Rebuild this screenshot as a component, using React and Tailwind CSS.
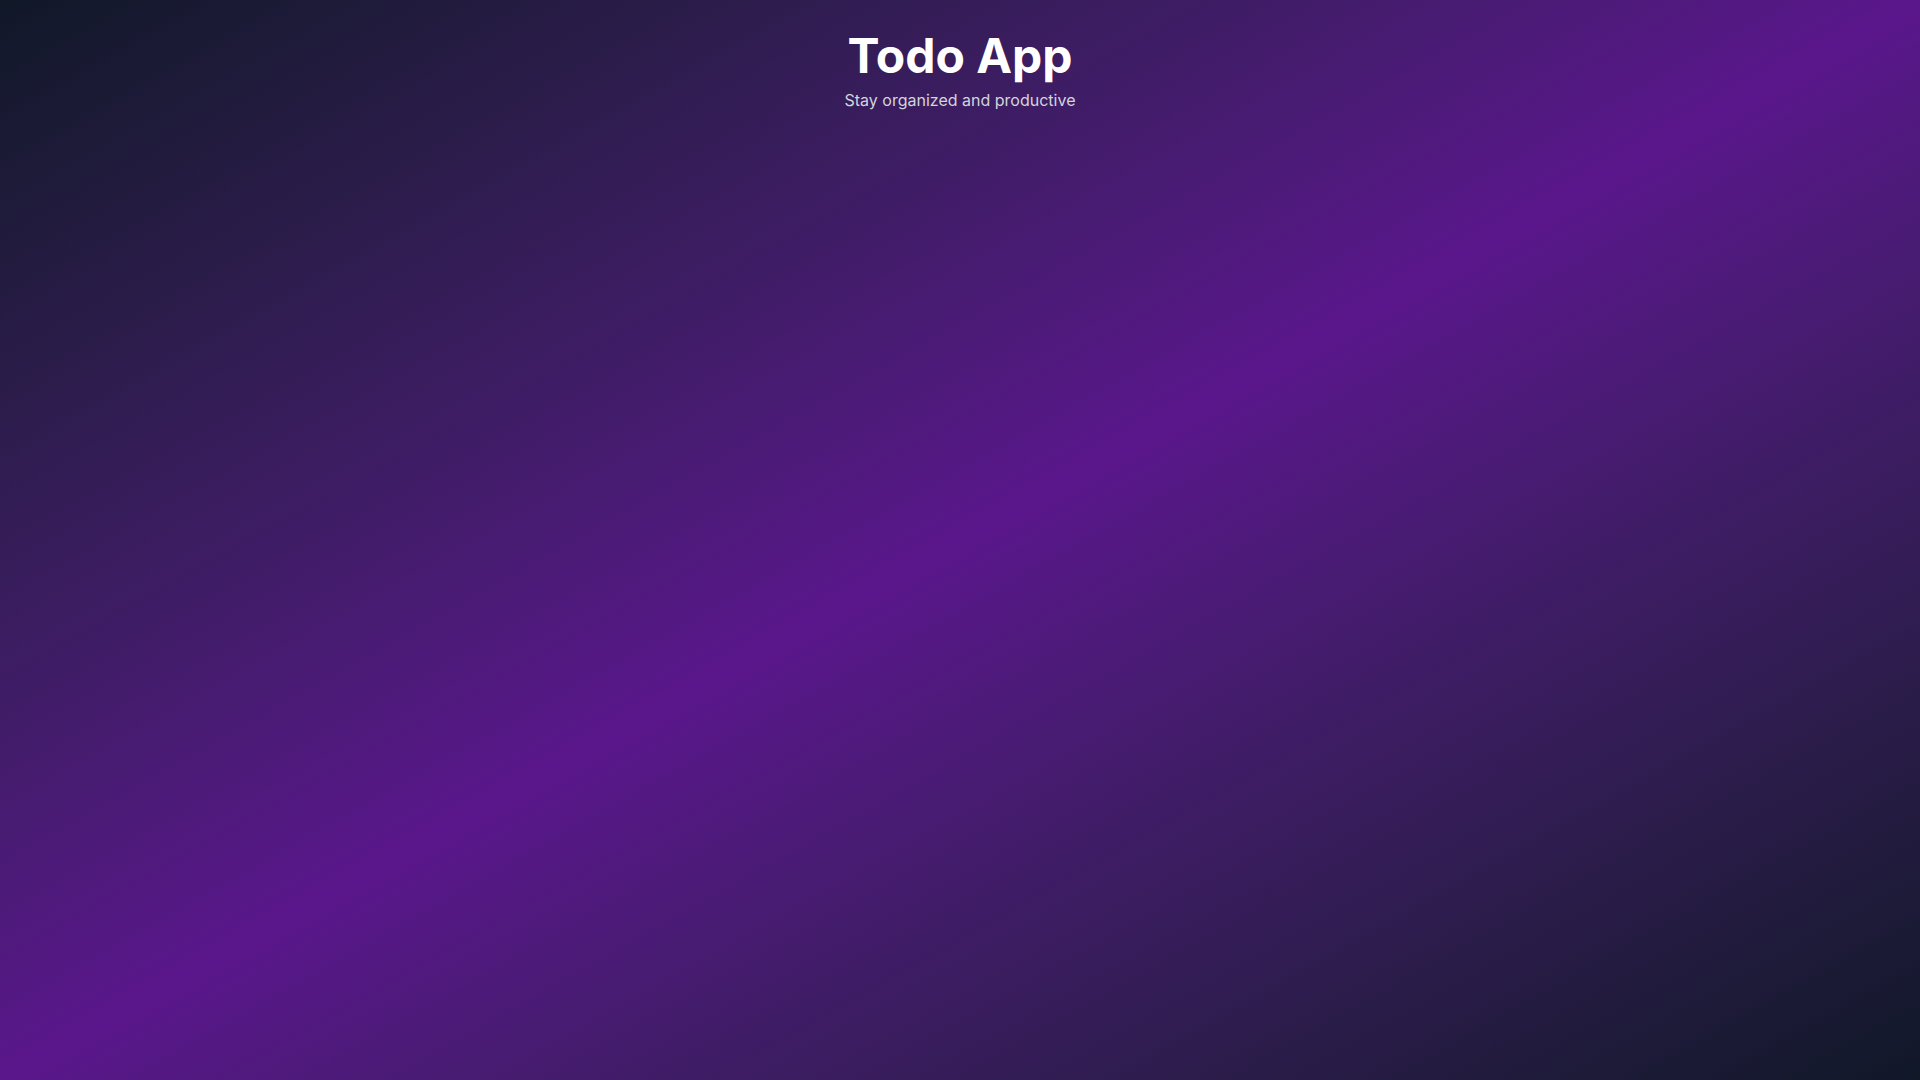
import React from 'react';

function App() {
  return (
    <div
      className="min-h-screen bg-gradient-to-br from-gray-900 via-purple-900 to-gray-900"
      style={{ fontFamily: 'Inter, "Noto Sans", sans-serif' }}
    >
      <div className="pt-8 text-center">
        <h1 className="text-5xl font-bold text-white mb-2">Todo App</h1>
        <p className="text-base text-gray-300">Stay organized and productive</p>
      </div>
    </div>
  );
}

export default App;
